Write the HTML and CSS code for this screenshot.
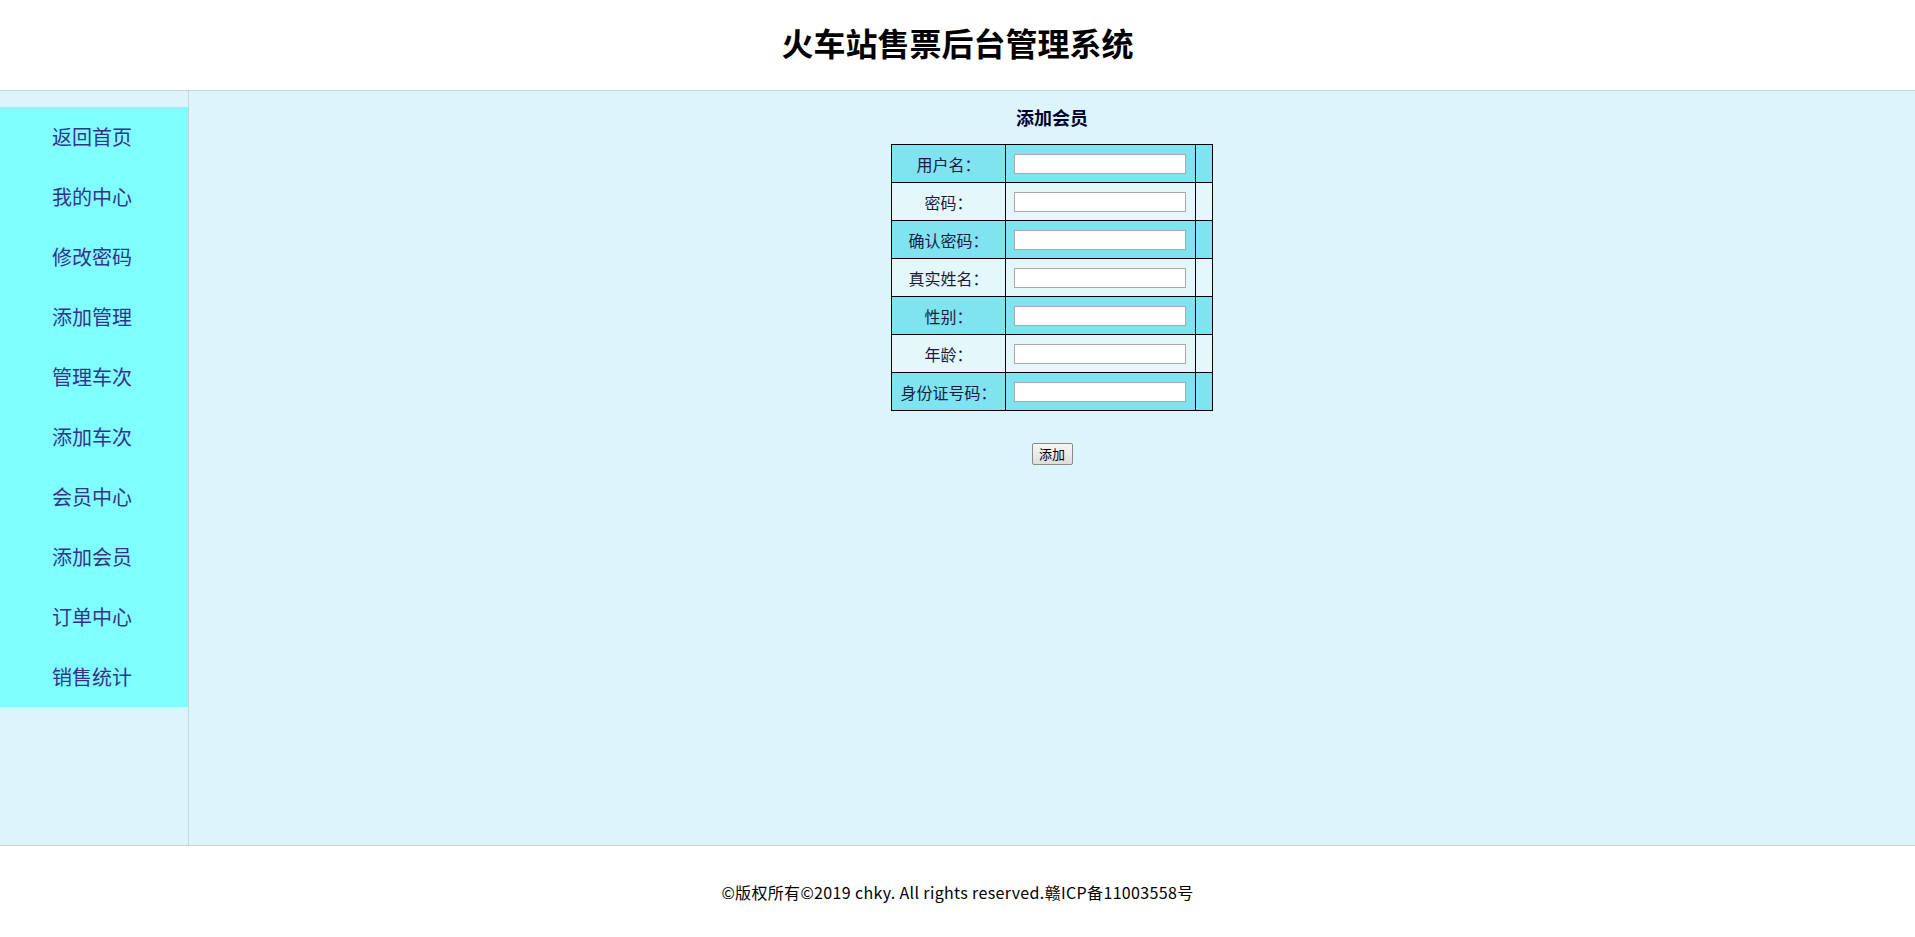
FILE: index.html
```html
<!DOCTYPE html>
<html lang="zh-CN">
<head>
<meta charset="utf-8">
<title>火车站售票后台管理系统</title>
<link rel="stylesheet" href="styles.css">
</head>
<body>
<header class="top">
  <h1 class="site-title">火车站售票后台管理系统</h1>
</header>
<div class="layout">
  <nav class="sidebar">
    <ul class="menu">
      <li><a href="#">返回首页</a></li>
      <li><a href="#">我的中心</a></li>
      <li><a href="#">修改密码</a></li>
      <li><a href="#">添加管理</a></li>
      <li><a href="#">管理车次</a></li>
      <li><a href="#">添加车次</a></li>
      <li><a href="#">会员中心</a></li>
      <li><a href="#">添加会员</a></li>
      <li><a href="#">订单中心</a></li>
      <li><a href="#">销售统计</a></li>
    </ul>
  </nav>
  <main class="content">
    <h2 class="page-title">添加会员</h2>
    <form class="form">
      <table class="form-table">
        <tr class="odd"><td class="label">用户名：</td><td class="field"><input type="text"></td><td class="extra"></td></tr>
        <tr class="even"><td class="label">密码：</td><td class="field"><input type="password"></td><td class="extra"></td></tr>
        <tr class="odd"><td class="label">确认密码：</td><td class="field"><input type="password"></td><td class="extra"></td></tr>
        <tr class="even"><td class="label">真实姓名：</td><td class="field"><input type="text"></td><td class="extra"></td></tr>
        <tr class="odd"><td class="label">性别：</td><td class="field"><input type="text"></td><td class="extra"></td></tr>
        <tr class="even"><td class="label">年龄：</td><td class="field"><input type="text"></td><td class="extra"></td></tr>
        <tr class="odd"><td class="label">身份证号码：</td><td class="field"><input type="text"></td><td class="extra"></td></tr>
      </table>
      <div class="actions"><button type="button" class="btn">添加</button></div>
    </form>
  </main>
</div>
<footer class="footer">©版权所有©2019 chky. All rights reserved.赣ICP备11003558号</footer>
</body>
</html>
```
FILE: styles.css
```css
html, body {
  margin: 0;
  padding: 0;
}
body {
  font-family: "Noto Sans CJK SC", "Noto Sans", sans-serif;
  background: #ffffff;
  color: #000;
}
.top {
  height: 91px;
  box-sizing: border-box;
  padding-bottom: 7px;
  border-bottom: 1px solid #c9d3d6;
  display: flex;
  align-items: center;
  justify-content: center;
}
.site-title {
  margin: 0;
  font-size: 32px;
  font-weight: bold;
  line-height: 40px;
  color: #000;
}
.layout {
  display: flex;
  height: 754px;
  background: #dbf5fa;
  border-bottom: 1px solid #c9d3d6;
}
.sidebar {
  width: 188px;
  border-right: 1px solid #c5d7dc;
  padding-top: 16px;
  background: #dbf5fa;
}
.menu {
  list-style: none;
  margin: 0;
  padding: 0;
  background: #80ffff;
}
.menu li {
  height: 60px;
  line-height: 60px;
}
.menu a {
  display: block;
  padding-left: 52px;
  font-size: 20px;
  color: #34348a;
  text-decoration: none;
}
.content {
  flex: 1;
  display: flex;
  flex-direction: column;
  align-items: center;
}
.page-title {
  margin: 14px 0 0;
  font-size: 18px;
  line-height: 24px;
  font-weight: bold;
  color: #000033;
}
.form {
  margin-top: 15px;
  display: flex;
  flex-direction: column;
  align-items: center;
}
.form-table {
  border-collapse: collapse;
  table-layout: fixed;
  width: 319px;
  font-size: 16px;
  color: #1a1a40;
}
.form-table td {
  border: 1px solid #000;
  height: 37px;
  padding: 0;
}
.form-table tr.odd { background: #7fe3f0; }
.form-table tr.even { background: #e4f8fb; }
.label {
  width: 113px;
  text-align: center;
  white-space: nowrap;
}
.field {
  width: 190px;
  padding-left: 8px !important;
  box-sizing: border-box;
}
.extra {
  width: 16px;
}
.field input {
  display: block;
  width: 172px;
  height: 20px;
  box-sizing: border-box;
  border: 1px solid #a9a9a9;
  background: #fff;
  margin: 0;
  padding: 1px 2px;
}
.actions {
  margin-top: 32px;
  display: flex;
}
.btn {
  width: 41px;
  height: 22px;
  padding: 0;
  font-family: "Noto Sans CJK SC", sans-serif;
  font-size: 13px;
  line-height: 18px;
  color: #000;
  border: 1px solid #8a8a8a;
  border-radius: 2px;
  background: linear-gradient(#f6f6f6, #dedede);
}
.footer {
  height: 91px;
  display: flex;
  align-items: center;
  justify-content: center;
  font-size: 16px;
  letter-spacing: 0.35px;
  color: #000;
}
```
